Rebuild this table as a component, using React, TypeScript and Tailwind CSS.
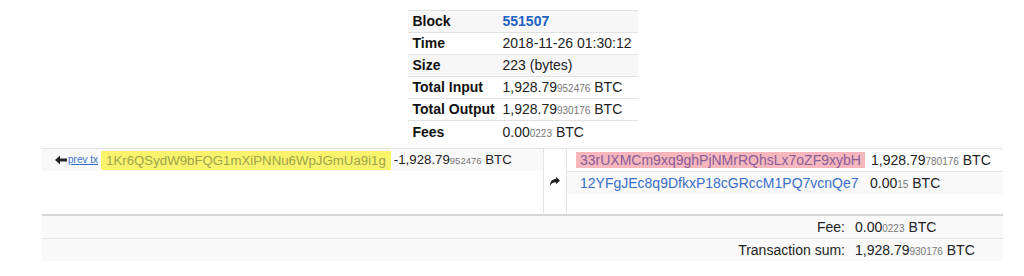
import React from "react";

const Amt = ({ big, small, smallSize = "text-[10px]" }: { big: string; small?: string; smallSize?: string }) => (
  <span className="whitespace-nowrap">
    {big}
    {small && <span className={`${smallSize} text-[#777]`}>{small}</span>} BTC
  </span>
);

const Row = ({ label, children, gray }: { label: string; children: React.ReactNode; gray?: boolean }) => (
  <div className={`flex h-[22px] items-center border-t border-[#e2e2e2] ${gray ? "bg-[#f7f7f7]" : "bg-white"}`}>
    <div className="w-[90px] pl-[5px] font-bold text-[#111]">{label}</div>
    <div className="flex-1 pl-[5px] text-[#222]">{children}</div>
  </div>
);

const LeftArrow = () => (
  <svg width="12" height="10" viewBox="0 0 12 10" className="shrink-0">
    <path d="M0 5 L5 0.5 L5 3.6 L12 3.6 L12 6.4 L5 6.4 L5 9.5 Z" fill="#222" />
  </svg>
);

const ShareArrow = () => (
  <svg width="10" height="9" viewBox="0 0 10 9">
    <path d="M10 3.5 L6 0 L6 2 C2.5 2 0 4 0 9 C1.5 6.2 3.2 5.2 6 5.2 L6 7.2 Z" fill="#222" />
  </svg>
);

export default function App() {
  return (
    <div
      className="w-[1024px] h-[276px] bg-white pl-[42px] pr-[21px] text-[14px] text-[#222]"
      style={{ fontFamily: '"Liberation Sans", Arial, sans-serif' }}
    >
      <div className="pt-[10px] flex justify-center">
        <div className="w-[230px]">
          <Row label="Block" gray>
            <span className="font-bold text-[#2160c4]">551507</span>
          </Row>
          <Row label="Time">2018-11-26 01:30:12</Row>
          <Row label="Size" gray>223 (bytes)</Row>
          <Row label="Total Input">
            <Amt big="1,928.79" small="952476" />
          </Row>
          <Row label="Total Output">
            <Amt big="1,928.79" small="930176" />
          </Row>
          <div className="border-t border-[#e2e2e2]">
            <div className="flex h-[22px] items-center">
              <div className="w-[90px] pl-[5px] font-bold text-[#111]">Fees</div>
              <div className="flex-1 pl-[5px]">
                <Amt big="0.00" small="0223" />
              </div>
            </div>
          </div>
        </div>
      </div>

      <div className="mt-[5px] border-t border-[#e4e4e4]">
        <div className="flex h-[65px]">
          <div className="w-[501px]">
            <div className="flex h-[22px] items-center bg-[#f9f9f9] pl-[13px] text-[13.25px]">
              <LeftArrow />
              <a className="ml-[1px] text-[10px] leading-[12px] text-[#3a6ec8] underline">prev tx</a>
              <span className="ml-[3px] bg-[#f8f36a] px-[5px] leading-[19px] text-[#9ea34e]">
                1Kr6QSydW9bFQG1mXiPNNu6WpJGmUa9i1g
              </span>
              <span className="ml-[3px]">
                <Amt big="-1,928.79" small="952476" smallSize="text-[9.5px]" />
              </span>
            </div>
          </div>
          <div className="flex w-[24px] items-center justify-center border-x border-[#e4e4e4]">
            <ShareArrow />
          </div>
          <div className="flex-1">
            <div className="flex h-[23px] items-center border-b border-[#e4e4e4] bg-white pl-[9px]">
              <div className="w-[295px]">
                <span className="bg-[#f5b7bc] px-[4px] leading-[19px] text-[#8a5c9c]">
                  33rUXMCm9xq9ghPjNMrRQhsLx7oZF9xybH
                </span>
              </div>
              <Amt big="1,928.79" small="780176" />
            </div>
            <div className="flex h-[22px] items-center bg-[#f9f9f9] pl-[9px]">
              <div className="w-[294px] px-[4px] text-[#3a6ec8]">12YFgJEc8q9DfkxP18cGRccM1PQ7vcnQe7</div>
              <Amt big="0.00" small="15" />
            </div>
          </div>
        </div>
        <div className="border-t-2 border-[#d6d6d6]">
          <div className="flex h-[22px] items-center bg-[#f9f9f9]">
            <div className="flex-1 text-right">Fee:</div>
            <div className="w-[158px] pl-[10px]">
              <Amt big="0.00" small="0223" />
            </div>
          </div>
          <div className="flex h-[23px] items-center border-t border-[#e4e4e4] bg-[#f9f9f9]">
            <div className="flex-1 text-right">Transaction sum:</div>
            <div className="w-[158px] pl-[10px]">
              <Amt big="1,928.79" small="930176" />
            </div>
          </div>
        </div>
      </div>
    </div>
  );
}
